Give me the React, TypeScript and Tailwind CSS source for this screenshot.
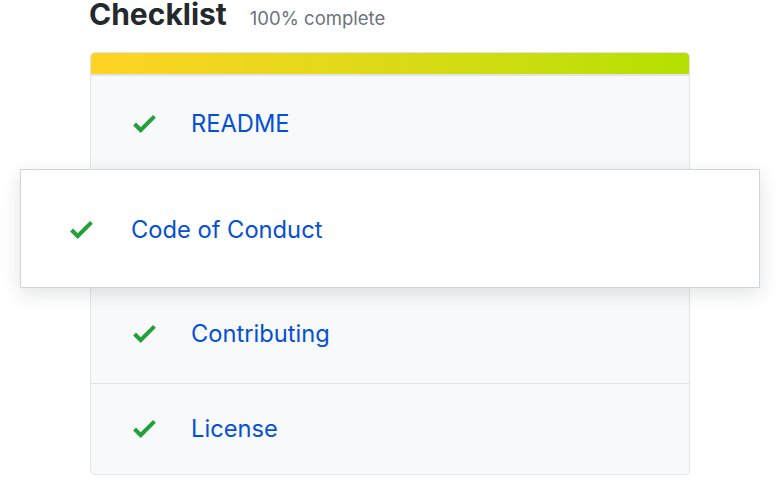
import React from 'react'

const font = { fontFamily: 'Inter, "Noto Sans", "Liberation Sans", sans-serif' }

function Check({ className = '' }: { className?: string }) {
  return (
    <svg viewBox="0 3.5 12 9.5" width="23" height="18" className={className} aria-hidden>
      <path d="M12 5l-8 8-4-4 1.5-1.5L4 10l6.5-6.5L12 5z" fill="#22a03a" />
    </svg>
  )
}

const rows = [
  { label: 'README', h: 'h-[97px]' },
  { label: 'Code of Conduct', h: 'h-[112px]' },
  { label: 'Contributing', h: 'h-[99px]' },
  { label: 'License', h: 'h-[90px]' },
]

export default function App() {
  return (
    <div className="relative w-[780px] h-[480px] overflow-hidden bg-white" style={font}>
      <div className="flex items-baseline gap-[23px] pl-[89px] mt-[-1px] h-[30px]">
        <h2 className="text-[30px] leading-[30px] font-bold text-[#24292e]">Checklist</h2>
        <span className="text-[18.5px] leading-none text-[#6a737d]">100% complete</span>
      </div>

      <div className="ml-[90px] mt-[23px] w-[600px] rounded-[5px] border border-[#e1e4e8] bg-[#f8f9fb] overflow-hidden">
        <div className="h-[21px] bg-gradient-to-r from-[#ffd324] to-[#b4e000] border-b-2 border-[#e1e4e8] box-content" />
        {rows.map((r, i) => (
          <div
            key={r.label}
            className={`flex items-center ${r.h} ${i < rows.length - 1 ? 'border-b border-[#e1e4e8]' : ''}`}
          >
            <Check className="ml-[42px]" />
            <span className="ml-[35px] text-[23.7px] text-[#0550d6]">{r.label}</span>
          </div>
        ))}
      </div>

      <div className="absolute left-[20px] top-[169px] w-[740px] h-[119px] pt-[3px] flex items-center bg-white border border-[#d1d5da] shadow-[0_6px_18px_rgba(27,31,35,0.12)]">
        <Check className="ml-[49px]" />
        <span className="ml-[38px] text-[23.7px] text-[#0550d6]">Code of Conduct</span>
      </div>
    </div>
  )
}
